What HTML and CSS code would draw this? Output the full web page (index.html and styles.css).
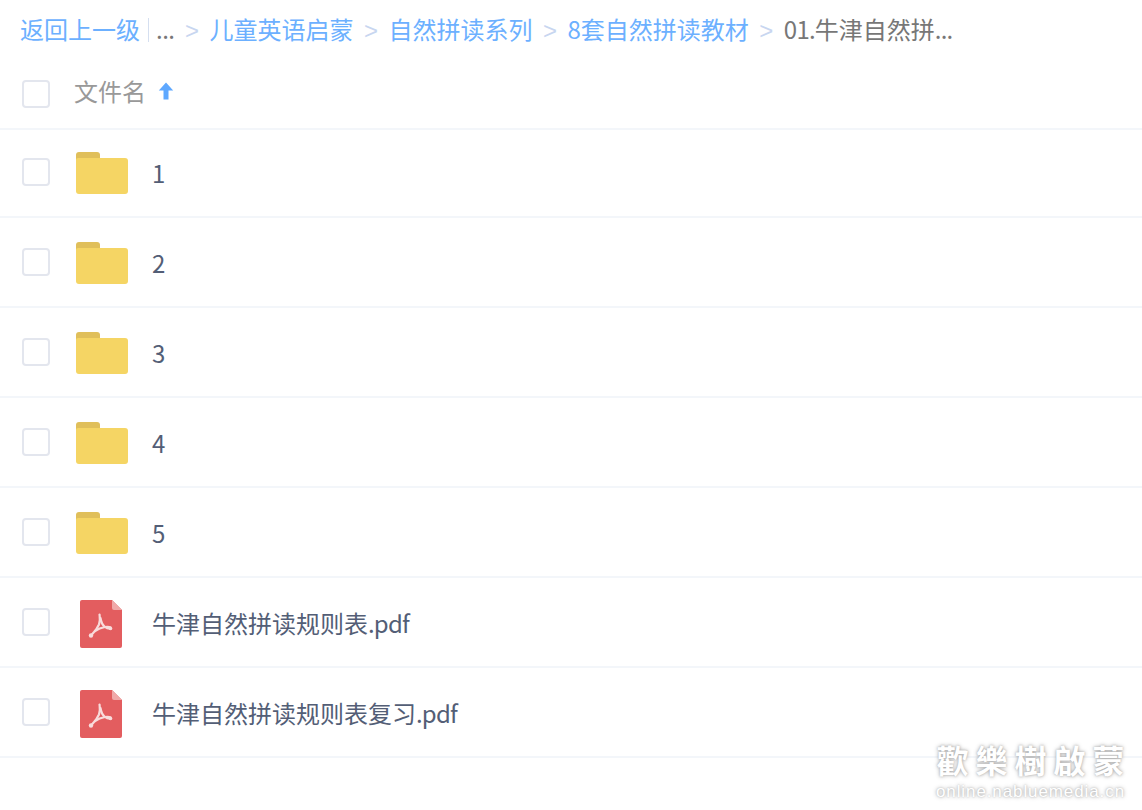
FILE: index.html
```html
<!DOCTYPE html>
<html lang="zh-CN">
<head>
    <meta charset="UTF-8">
    <title>文件列表</title>
    <link rel="stylesheet" href="styles.css">
</head>
<body>
    <svg class="defs" width="0" height="0">
        <symbol id="folder" viewBox="0 0 52 42">
            <path d="M0 3a3 3 0 0 1 3-3h18a3 3 0 0 1 3 3v6H0z" fill="#e0bf5a"/>
            <path d="M0 8a2 2 0 0 1 2-2h21l1 0h25a3 3 0 0 1 3 3v30a3 3 0 0 1-3 3H3a3 3 0 0 1-3-3z" fill="#f5d564"/>
        </symbol>
        <symbol id="pdf" viewBox="0 0 42 48">
            <path d="M2 0h30l10 10v36a2 2 0 0 1-2 2H2a2 2 0 0 1-2-2V2a2 2 0 0 1 2-2z" fill="#e35d5f"/>
            <path d="M32 0l10 10H34a2 2 0 0 1-2-2z" fill="#f0a9a9"/>
            <g fill="none" stroke="#f8dcdc" stroke-width="2.200" stroke-linecap="round" stroke-linejoin="round">
                <path d="M19.500 14.500c.5 4 1 6 -.5 10-1.500 3.500-4 7-7.500 10.500"/>
                <path d="M20.500 18c.5 4 2 7 4.500 9 1.800 1.400 4 1.800 6 1.500"/>
                <path d="M15 31c3.500-2.500 7-3.500 10-4 2-.3 4-.3 5.500 .3"/>
            </g>
            <circle cx="11" cy="35.500" r="2.200" fill="#f8dcdc"/>
            <circle cx="30.500" cy="28.500" r="1.800" fill="#f8dcdc"/>
        </symbol>
    </svg>

    <div class="breadcrumb">
        <a class="crumb" href="#">返回上一级</a>
        <span class="bar"></span>
        <span class="dots">...</span>
        <span class="sep">&gt;</span>
        <a class="crumb" href="#">儿童英语启蒙</a>
        <span class="sep">&gt;</span>
        <a class="crumb" href="#">自然拼读系列</a>
        <span class="sep">&gt;</span>
        <a class="crumb" href="#">8套自然拼读教材</a>
        <span class="sep">&gt;</span>
        <span class="current"><span class="tight">01.</span>牛津自然拼<span class="tight">...</span></span>
    </div>

    <div class="list-head">
        <span class="check"></span>
        <span class="head-name">文件名</span>
        <svg class="sort" width="16" height="18" viewBox="0 0 16 18"><path d="M8 0.500L0.800 8.500h4.700v9h5v-9h4.700z" fill="#5ea8ff"/></svg>
    </div>

    <ul class="files">
        <li class="row"><span class="check"></span><svg class="ico-folder"><use href="#folder"/></svg><span class="name">1</span></li>
        <li class="row"><span class="check"></span><svg class="ico-folder"><use href="#folder"/></svg><span class="name">2</span></li>
        <li class="row"><span class="check"></span><svg class="ico-folder"><use href="#folder"/></svg><span class="name">3</span></li>
        <li class="row"><span class="check"></span><svg class="ico-folder"><use href="#folder"/></svg><span class="name">4</span></li>
        <li class="row"><span class="check"></span><svg class="ico-folder"><use href="#folder"/></svg><span class="name">5</span></li>
        <li class="row"><span class="check"></span><svg class="ico-pdf"><use href="#pdf"/></svg><span class="name">牛津自然拼读规则表<span class="tight">.pdf</span></span></li>
        <li class="row"><span class="check"></span><svg class="ico-pdf"><use href="#pdf"/></svg><span class="name">牛津自然拼读规则表复习<span class="tight">.pdf</span></span></li>
    </ul>

    <div class="watermark">
        <div class="wm-title">歡樂樹啟蒙</div>
        <div class="wm-url">online.nabluemedia.cn</div>
    </div>
</body>
</html>
```

FILE: styles.css
```css
body {
    margin: 0;
    background-color: #fff;
    font-family: "Noto Sans CJK SC", "Noto Sans", sans-serif;
    overflow: hidden;
}
.defs {
    position: absolute;
}
.breadcrumb {
    display: flex;
    align-items: center;
    height: 56px;
    padding-left: 20px;
    padding-bottom: 4px;
    font-size: 24px;
    font-weight: 400;
    white-space: nowrap;
}
.crumb {
    color: #6cb0ff;
    text-decoration: none;
}
.bar {
    width: 1px;
    height: 24px;
    margin-left: 8px;
    margin-top: 4px;
    background-color: #d5dff0;
}
.dots {
    margin-left: 7px;
    letter-spacing: -0.5px;
    color: #777;
}
.sep {
    width: 35px;
    padding-top: 6px;
    text-align: center;
    color: #c8d6f0;
    font-family: "Liberation Sans", sans-serif;
    font-size: 24px;
}
.current {
    color: #777;
}
.tight {
    letter-spacing: -0.8px;
}
.list-head {
    display: flex;
    align-items: center;
    height: 68px;
    padding-left: 22px;
    border-bottom: 2px solid #f3f6fa;
}
.head-name {
    margin-left: 24px;
    margin-top: -8px;
    font-size: 24px;
    font-weight: 400;
    color: #999;
}
.sort {
    margin-left: 12px;
    margin-top: -7px;
}
.check {
    box-sizing: border-box;
    flex: none;
    width: 28px;
    height: 28px;
    border: 2px solid #e3e6ee;
    border-radius: 4px;
    background-color: #fff;
}
.files {
    list-style: none;
    margin: -2px 0 0;
    padding: 0;
}
.row {
    display: flex;
    align-items: center;
    height: 88px;
    padding-left: 22px;
    border-bottom: 2px solid #f3f6fa;
}
.ico-folder {
    width: 52px;
    height: 42px;
    margin-left: 26px;
    margin-top: 2px;
    filter: blur(0.4px);
}
.ico-pdf {
    width: 42px;
    height: 48px;
    margin-left: 30px;
    margin-right: 30px;
    margin-top: 4px;
    filter: blur(0.4px);
}
.ico-folder + .name {
    margin-left: 24px;
}
.name {
    font-size: 24px;
    font-weight: 400;
    color: #535e76;
}
.watermark {
    position: absolute;
    right: 17px;
    top: 738px;
    text-align: center;
    color: #fff;
    text-shadow: 0 0 4px #aaa, 0 0 2px #bbb;
}
.wm-title {
    font-size: 32px;
    font-weight: 700;
    line-height: 42px;
    letter-spacing: 7px;
    margin-right: -7px;
}
.wm-url {
    font-family: "Liberation Sans", sans-serif;
    font-size: 17px;
    line-height: 24px;
    letter-spacing: 0.9px;
}
```
